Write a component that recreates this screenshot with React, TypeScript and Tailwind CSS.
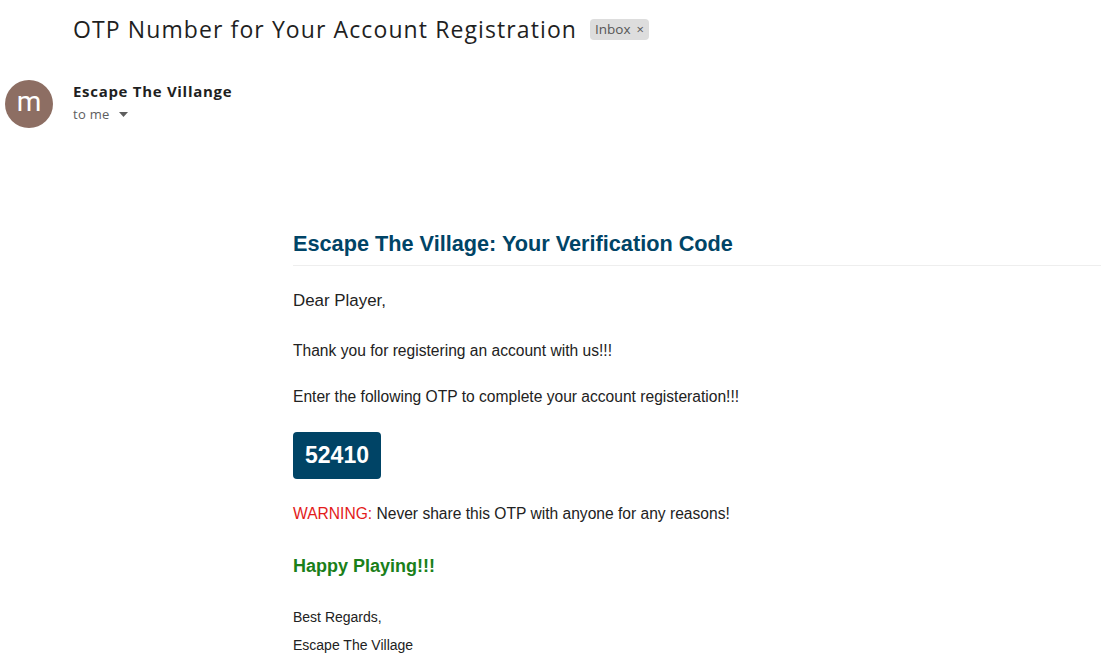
import React from 'react';

const arial = { fontFamily: '"Liberation Sans", Arial, sans-serif' };

const App: React.FC = () => {
    return (
        <div className="min-h-screen bg-white text-[#1f1f1f]" style={{ fontFamily: '"Open Sans", Roboto, sans-serif' }}>
            {/* subject line */}
            <div className="flex items-center pl-[73px] pt-[14px]">
                <h1 className="text-[23px] leading-[30px] font-normal tracking-[1.1px] text-[#1f1f1f]">OTP Number for Your Account Registration</h1>
                <span className="ml-[13px] flex h-[21px] items-center gap-[6px] rounded-[4px] bg-[#dddddd] px-[5px] text-[13.5px] text-[#555]">
                    Inbox
                    <span className="text-[13px] leading-none text-[#555]">×</span>
                </span>
            </div>

            {/* sender */}
            <div className="mt-[36px] flex pl-[5px]">
                <div className="flex h-[48px] w-[48px] items-center justify-center rounded-full bg-[#8d6e63] pb-[4px] text-[28px] text-white" style={{ fontFamily: 'Roboto, sans-serif' }}>m</div>
                <div className="ml-[20px] pt-[1px]">
                    <div className="text-[15px] font-bold leading-[20px] tracking-[0.7px] text-[#1f1f1f]">Escape The Villange</div>
                    <div className="mt-[4px] flex items-center gap-[9px] text-[13px] leading-[18px] tracking-[0.3px] text-[#5e5e5e]">
                        to me
                        <svg width="9" height="5" viewBox="0 0 9 5"><path d="M0 0h9L4.5 5z" fill="#5e5e5e" /></svg>
                    </div>
                </div>
            </div>

            {/* email body */}
            <div className="ml-[293px] pb-[20px] text-[#222]" style={arial}>
                <h2 className="mt-[103px] border-b border-[#eeeeee] pb-[8px] text-[21.7px] font-bold leading-[26px] text-[#004466]">
                    Escape The Village: Your Verification Code
                </h2>
                <p className="mt-[25px] text-[16.9px] leading-[20px]">Dear Player,</p>
                <p className="mt-[30px] text-[15.6px] leading-[20px]">Thank you for registering an account with us!!!</p>
                <p className="mt-[26px] text-[15.6px] leading-[20px]">Enter the following OTP to complete your account registeration!!!</p>
                <div className="mt-[25px] flex h-[47px] w-[88px] items-center justify-center rounded-[4px] bg-[#004466] text-[23px] font-bold text-white">
                    52410
                </div>
                <p className="mt-[25px] text-[15.6px] leading-[20px]">
                    <span className="text-[#e31b1b]">WARNING:</span> Never share this OTP with anyone for any reasons!
                </p>
                <p className="mt-[31px] text-[18px] font-bold leading-[22px] text-[#1a801a]">Happy Playing!!!</p>
                <p className="mt-[31px] text-[14px] leading-[18px]">Best Regards,</p>
                <p className="mt-[10px] text-[14px] leading-[18px]">Escape The Village</p>
            </div>
        </div>
    );
};

export default App;
